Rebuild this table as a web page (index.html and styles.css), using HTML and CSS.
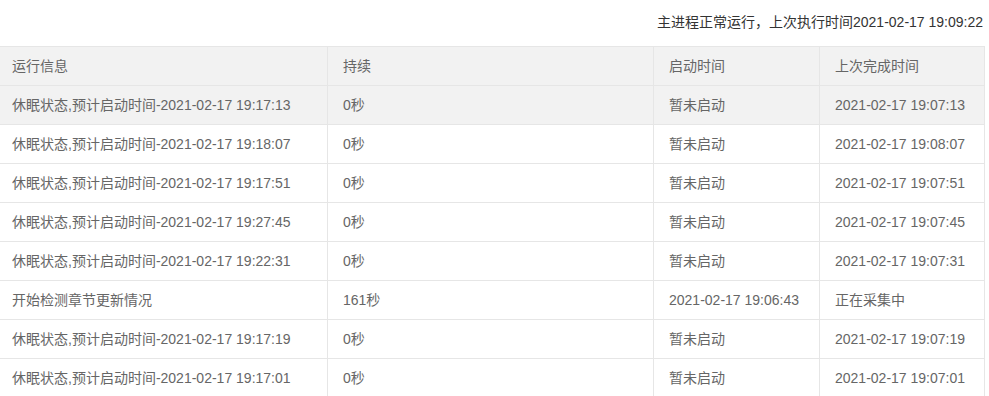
FILE: index.html
```html
<!DOCTYPE html>
<html lang="zh-CN">
<head>
<meta charset="utf-8">
<title>运行状态</title>
<link rel="stylesheet" href="styles.css">
</head>
<body>
<div class="status">主进程正常运行，上次执行时间2021-02-17 19:09:22</div>
<table class="grid">
  <colgroup>
    <col class="c1"><col class="c2"><col class="c3"><col class="c4">
  </colgroup>
  <thead>
    <tr><th>运行信息</th><th>持续</th><th>启动时间</th><th>上次完成时间</th></tr>
  </thead>
  <tbody>
    <tr class="hover"><td>休眠状态,预计启动时间-2021-02-17 19:17:13</td><td>0秒</td><td>暂未启动</td><td>2021-02-17 19:07:13</td></tr>
    <tr><td>休眠状态,预计启动时间-2021-02-17 19:18:07</td><td>0秒</td><td>暂未启动</td><td>2021-02-17 19:08:07</td></tr>
    <tr><td>休眠状态,预计启动时间-2021-02-17 19:17:51</td><td>0秒</td><td>暂未启动</td><td>2021-02-17 19:07:51</td></tr>
    <tr><td>休眠状态,预计启动时间-2021-02-17 19:27:45</td><td>0秒</td><td>暂未启动</td><td>2021-02-17 19:07:45</td></tr>
    <tr><td>休眠状态,预计启动时间-2021-02-17 19:22:31</td><td>0秒</td><td>暂未启动</td><td>2021-02-17 19:07:31</td></tr>
    <tr><td>开始检测章节更新情况</td><td>161秒</td><td>2021-02-17 19:06:43</td><td>正在采集中</td></tr>
    <tr><td>休眠状态,预计启动时间-2021-02-17 19:17:19</td><td>0秒</td><td>暂未启动</td><td>2021-02-17 19:07:19</td></tr>
    <tr><td>休眠状态,预计启动时间-2021-02-17 19:17:01</td><td>0秒</td><td>暂未启动</td><td>2021-02-17 19:07:01</td></tr>
  </tbody>
</table>
</body>
</html>
```
FILE: styles.css
```css
html, body {
  margin: 0;
  padding: 0;
  background: #fff;
  overflow: hidden;
}
body {
  font-family: "Liberation Sans", "Noto Sans CJK SC", Arial, sans-serif;
  font-size: 14px;
  color: #666;
}
.status {
  text-align: right;
  line-height: 20px;
  padding: 12px 6px 14px 0;
  color: #333;
}
.grid {
  border-collapse: collapse;
  table-layout: fixed;
  width: 988px;
  margin-left: -4px;
}
.c1 { width: 331px; }
.c2 { width: 326px; }
.c3 { width: 166px; }
.c4 { width: 165px; }
.grid th, .grid td {
  border: 1px solid #e6e6e6;
  padding: 9px 15px;
  line-height: 20px;
  text-align: left;
  font-weight: normal;
  white-space: nowrap;
  overflow: hidden;
}
.grid thead tr { background: #f2f2f2; }
.grid tr.hover { background: #f2f2f2; }
```
